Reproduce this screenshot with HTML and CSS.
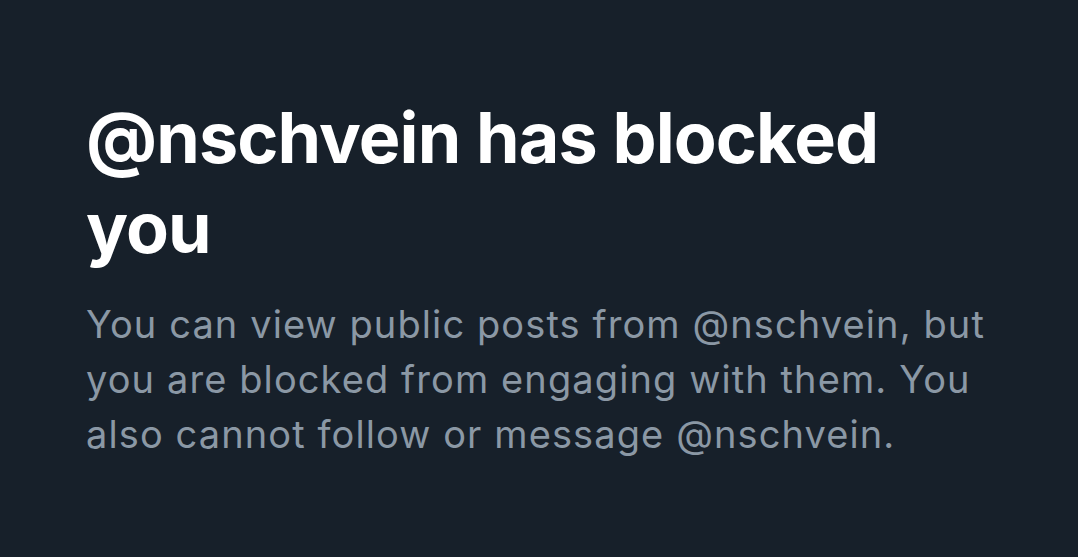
FILE: index.html
```html
<!DOCTYPE html>
<html lang="en">
<head>
<meta charset="utf-8">
<link rel="stylesheet" href="styles.css">
</head>
<body>
<main class="notice">
  <h1 class="title">@nschvein has blocked you</h1>
  <p class="text">You can view public posts from @nschvein, but you are blocked from engaging with them. You also cannot follow or message @nschvein.</p>
</main>
</body>
</html>
```
FILE: styles.css
```css
html, body {
  margin: 0;
  padding: 0;
  background: #17202a;
  height: 100%;
}
body {
  font-family: Inter, "Open Sans", "Liberation Sans", sans-serif;
}
.notice {
  padding: 93px 0 0 86px;
  width: 905px;
}
.title {
  margin: 0;
  color: #ffffff;
  font-weight: 700;
  font-size: 70px;
  line-height: 90px;
  letter-spacing: -0.9px;
}
.text {
  margin: 24px 0 0;
  color: #8b98a5;
  font-weight: 400;
  font-size: 38px;
  line-height: 55px;
  letter-spacing: 1.1px;
}
```
